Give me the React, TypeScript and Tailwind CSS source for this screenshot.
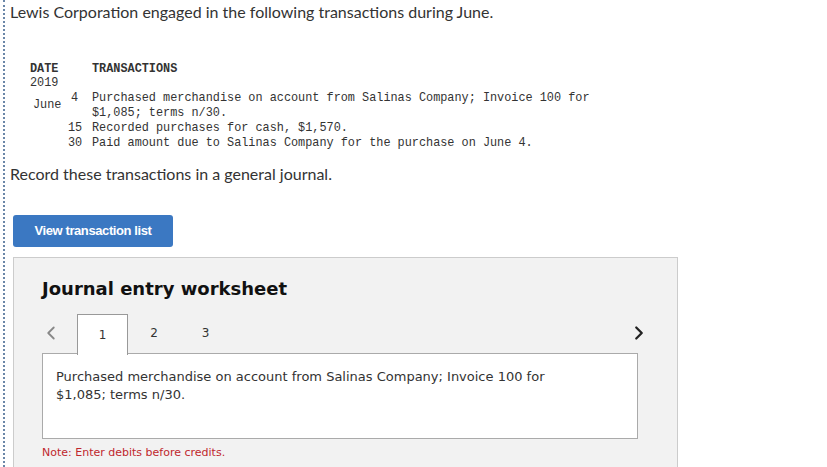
import { ChevronLeft, ChevronRight } from "lucide-react";

const rows = [
	{ day: "4", text: ["Purchased merchandise on account from Salinas Company; Invoice 100 for", "$1,085; terms n/30."] },
	{ day: "15", text: ["Recorded purchases for cash, $1,570."] },
	{ day: "30", text: ["Paid amount due to Salinas Company for the purchase on June 4."] },
];

const mono = "font-['Liberation_Mono',monospace] text-[11.85px] leading-[15px] text-[#333]";
const verdana = "font-['DejaVu_Sans',Verdana,sans-serif]";

export default function App() {
	return (
		<div className="h-[467px] w-[827px] overflow-hidden bg-white">
			<div className="ml-[3px] h-full border-l-2 border-dotted border-[#6a86a8] pl-[5px] font-['Lato',sans-serif] text-[#333]">
				<p className="pt-[2px] text-[16px] leading-[20px]">
					Lewis Corporation engaged in the following transactions during June.
				</p>

				<div className={`mt-[40px] ${mono}`}>
					<div className="flex">
						<div className="w-[82px] pl-[20px] font-bold">DATE</div>
						<div className="font-bold">TRANSACTIONS</div>
					</div>
					<div className="mt-[-1px] pl-[20px]">2019</div>
					<div className="flex">
						<div className="w-[58px] pt-[7px] pl-[23px]">June</div>
						<div className="flex-1">
							{rows.map((r) => (
								<div key={r.day} className="flex">
									<div className="w-[24px] pr-[14px] text-right">{r.day}</div>
									<div>
										{r.text.map((t) => (
											<div key={t}>{t}</div>
										))}
									</div>
								</div>
							))}
						</div>
					</div>
				</div>

				<p className="mt-[13px] text-[16px] leading-[20px]">Record these transactions in a general journal.</p>

				<button className="mt-[31px] ml-[3px] h-[32px] w-[160px] rounded-[3px] bg-[#3b78c2] font-['Liberation_Sans_Narrow','Liberation_Sans',sans-serif] text-[13px] font-bold tracking-[-0.4px] text-white">
					View transaction list
				</button>

				<div className={`mt-[10px] ml-[3px] h-[300px] w-[665px] border border-[#cccccc] bg-[#f2f2f2] pl-[28px] ${verdana}`}>
					<h2 className="pt-[18px] text-[18px] font-bold leading-[26px] text-[#111]">Journal entry worksheet</h2>

					<div className="mt-[11px] flex h-[40px] w-[596px] items-center">
						<ChevronLeft className="-ml-[2px] h-[22px] w-[22px] text-[#888]" strokeWidth={2} />
						<div className="relative z-10 ml-[15px] mt-[1px] flex h-[41px] w-[51px] items-center justify-center self-start border border-b-0 border-[#999] bg-white text-[12px] text-[#333]">
							1
						</div>
						<div className="w-[52px] text-center text-[12px] text-[#333]">2</div>
						<div className="w-[51px] text-center text-[12px] text-[#333]">3</div>
						<ChevronRight className="ml-auto mr-[-12px] h-[22px] w-[22px] text-[#222]" strokeWidth={2.5} />
					</div>

					<div className="h-[86px] w-[596px] border border-[#aaaaaa] bg-white px-[13px] pt-[14px] text-[13px] leading-[18px] text-[#333]">
						Purchased merchandise on account from Salinas Company; Invoice 100 for
						<br />
						$1,085; terms n/30.
					</div>

					<p className="mt-[7px] text-[11px] leading-[14px] text-[#c0272d]">Note: Enter debits before credits.</p>
				</div>
			</div>
		</div>
	);
}
